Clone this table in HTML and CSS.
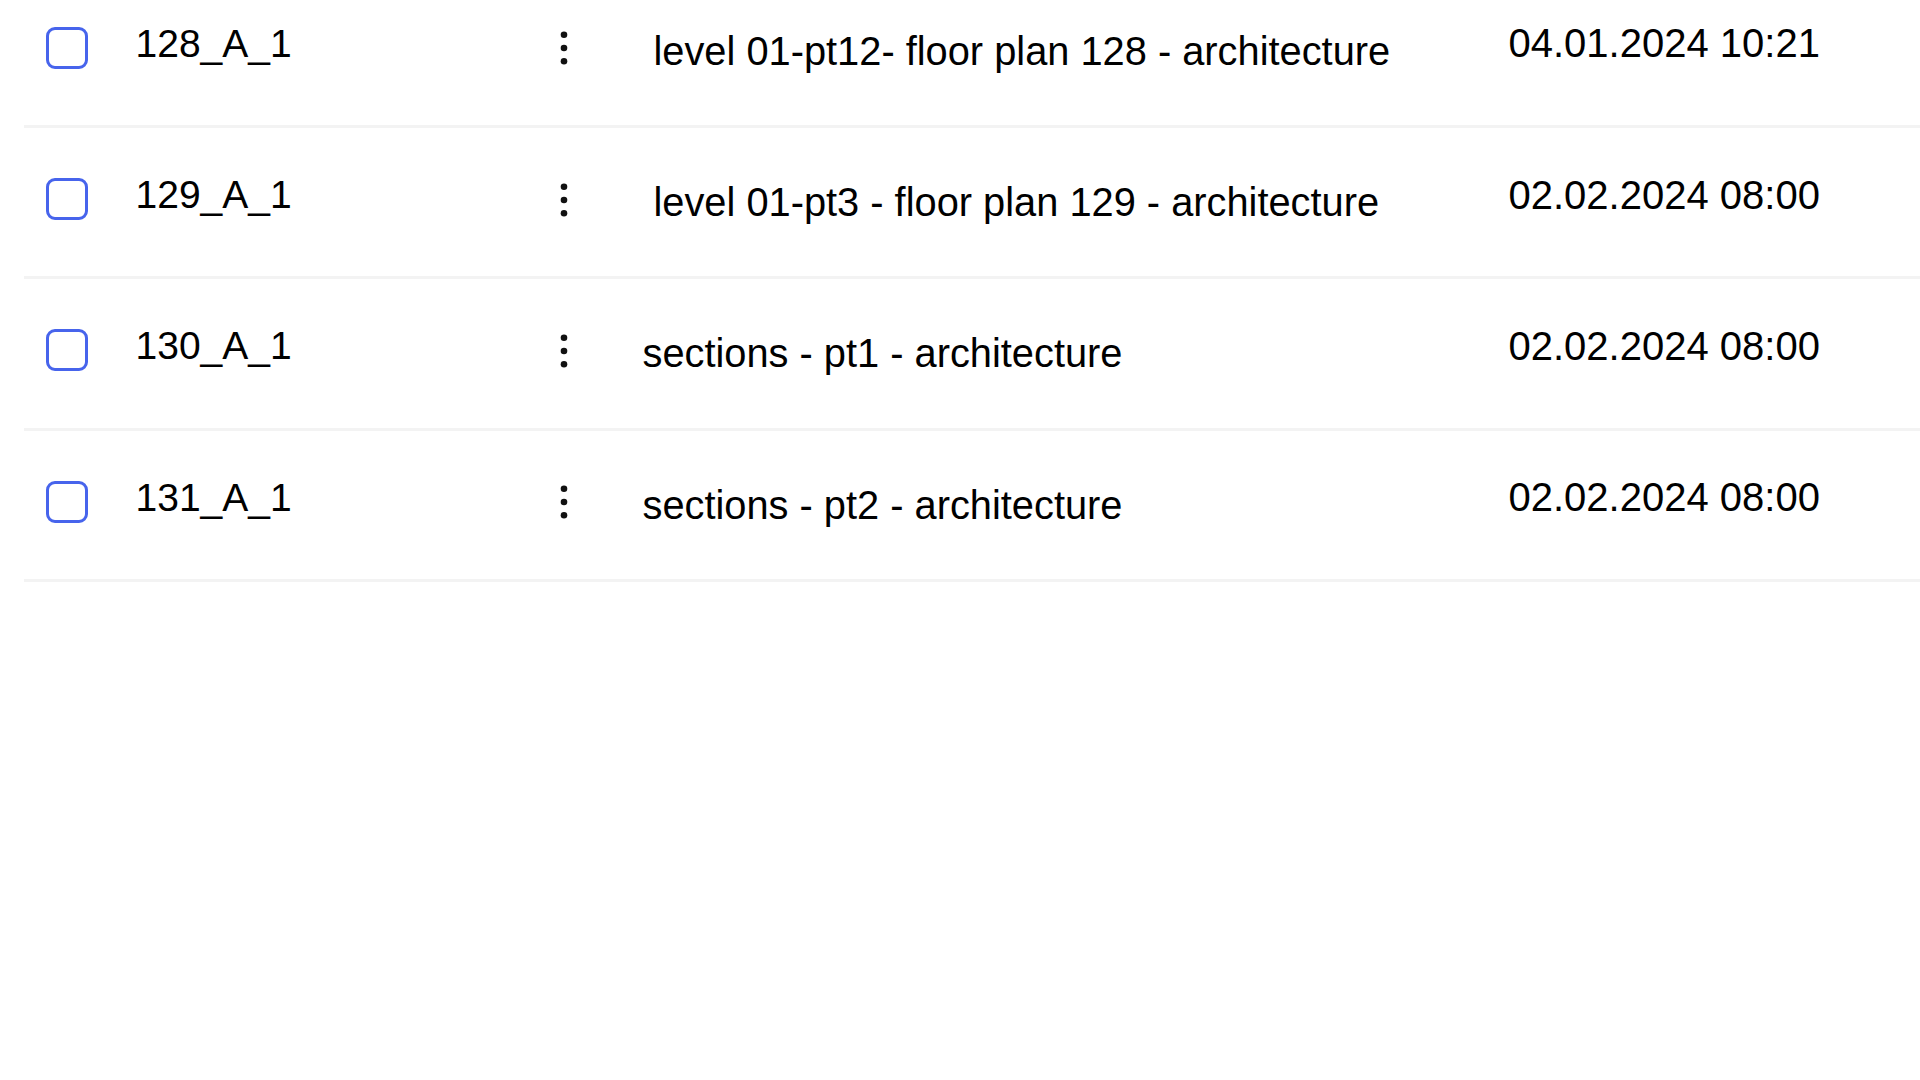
FILE: index.html
```html
<!DOCTYPE html>
<html lang="en">
<head>
<meta charset="utf-8">
<title>Drawings</title>
<link rel="stylesheet" href="styles.css">
</head>
<body>
<div class="list">
  <div class="row">
    <span class="check"></span>
    <span class="id">128_A_1</span>
    <button class="kebab" aria-label="More"><svg width="20" height="40" viewBox="0 0 20 40"><circle cx="10" cy="6.7" r="3.3"/><circle cx="10" cy="20" r="3.3"/><circle cx="10" cy="33.3" r="3.3"/></svg></button>
    <span class="name name-indent">level 01-pt12- floor plan 128 - architecture</span>
    <span class="date">04.01.2024 10:21</span>
  </div>
  <div class="row">
    <span class="check"></span>
    <span class="id">129_A_1</span>
    <button class="kebab" aria-label="More"><svg width="20" height="40" viewBox="0 0 20 40"><circle cx="10" cy="6.7" r="3.3"/><circle cx="10" cy="20" r="3.3"/><circle cx="10" cy="33.3" r="3.3"/></svg></button>
    <span class="name name-indent">level 01-pt3 - floor plan 129 - architecture</span>
    <span class="date">02.02.2024 08:00</span>
  </div>
  <div class="row">
    <span class="check"></span>
    <span class="id">130_A_1</span>
    <button class="kebab" aria-label="More"><svg width="20" height="40" viewBox="0 0 20 40"><circle cx="10" cy="6.7" r="3.3"/><circle cx="10" cy="20" r="3.3"/><circle cx="10" cy="33.3" r="3.3"/></svg></button>
    <span class="name">sections - pt1 - architecture</span>
    <span class="date">02.02.2024 08:00</span>
  </div>
  <div class="row">
    <span class="check"></span>
    <span class="id">131_A_1</span>
    <button class="kebab" aria-label="More"><svg width="20" height="40" viewBox="0 0 20 40"><circle cx="10" cy="6.7" r="3.3"/><circle cx="10" cy="20" r="3.3"/><circle cx="10" cy="33.3" r="3.3"/></svg></button>
    <span class="name">sections - pt2 - architecture</span>
    <span class="date">02.02.2024 08:00</span>
  </div>
</div>
</body>
</html>
```

FILE: styles.css
```css
html, body {
  margin: 0;
  padding: 0;
  background: #ffffff;
}

body {
  font-family: "Liberation Sans", Arial, Helvetica, sans-serif;
  color: #000000;
  overflow: hidden;
}

.list {
  margin-top: -23.33px;
  margin-left: 24px;
  display: flex;
  flex-direction: column;
}

.row {
  display: flex;
  align-items: flex-start;
  height: 151.33px;
  box-sizing: border-box;
  border-bottom: 3px solid #f3f3f3;
  padding-left: 22px;
}

.check {
  flex: 0 0 auto;
  width: 42px;
  height: 42px;
  box-sizing: border-box;
  border: 3px solid #4764ec;
  border-radius: 9px;
  margin-top: 50px;
}

.id {
  flex: 0 0 auto;
  width: 418px;
  margin-left: 47.5px;
  margin-top: 47px;
  font-size: 39px;
  line-height: 39px;
  white-space: nowrap;
}

.kebab {
  flex: 0 0 auto;
  width: 20px;
  height: 40px;
  padding: 0;
  margin: 51.7px 0 0 0;
  border: 0;
  background: none;
  display: block;
}

.kebab svg {
  display: block;
  fill: #111111;
}

.name {
  flex: 0 0 auto;
  width: 866px;
  box-sizing: border-box;
  margin-left: 69px;
  margin-top: 54px;
  font-size: 39.8px;
  line-height: 40px;
  white-space: nowrap;
}

.name-indent {
  padding-left: 11px;
}

.date {
  flex: 0 0 auto;
  margin-top: 46.5px;
  font-size: 40px;
  line-height: 40px;
  white-space: nowrap;
}
```
